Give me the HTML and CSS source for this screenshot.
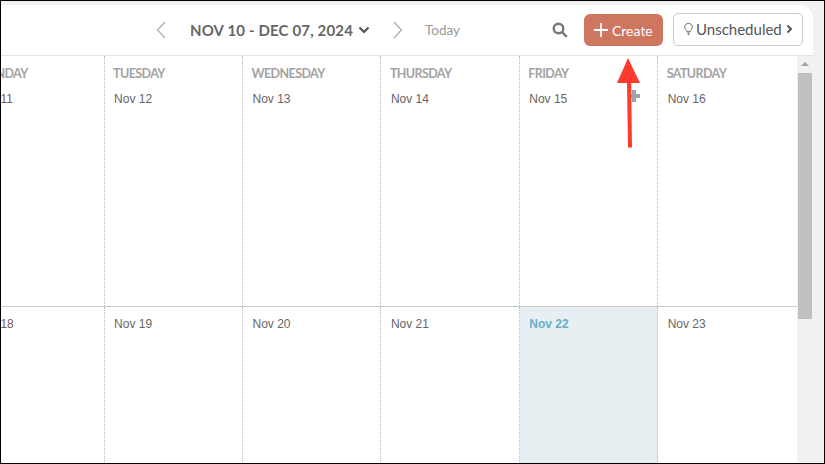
FILE: index.html
```html
<!DOCTYPE html>
<html lang="en">
<head>
  <meta charset="UTF-8">
  <meta name="viewport" content="width=device-width, initial-scale=1.0">
  <title>Calendar</title>
  <link rel="stylesheet" href="styles.css">
</head>
<body>
  <div class="app">
    <header class="topbar">
      <svg class="nav-arrow" width="10" height="18" viewBox="0 0 10 18"><path d="M9 1 1.500 9 9 17"/></svg>
      <div class="range">NOV 10 - DEC 07, 2024</div>
      <svg class="range-caret" width="12" height="8" viewBox="0 0 12 8"><path d="M1.500 1.500 6 6l4.500-4.500"/></svg>
      <svg class="nav-arrow next" width="10" height="18" viewBox="0 0 10 18"><path d="M1 1l7.500 8L1 17"/></svg>
      <span class="today-link">Today</span>
      <svg class="search" width="16" height="16" viewBox="0 0 16 16"><circle cx="6.500" cy="6.500" r="4.800"/><path d="M10 10l4.800 4.800"/></svg>
      <button class="btn-create">
        <svg width="14" height="14" viewBox="0 0 14 14"><path d="M7 0v14M0 7h14"/></svg>
        Create
      </button>
      <button class="btn-unscheduled">
        <svg width="9" height="14" viewBox="0 0 10 14"><path class="bulb" d="M3.300 10C3 7.800.8 7.400.8 4.700.8 2.400 2.700.8 5 .8s4.200 1.600 4.200 3.900C9.200 7.400 7 7.800 6.700 10z"/><path class="bulb-base" d="M3.600 11.500h2.800M4.200 13h1.600"/></svg>
        Unscheduled
        <svg class="caret" width="7" height="10" viewBox="0 0 7 10"><path d="M1.500 1.500 5 5 1.500 8.500"/></svg>
      </button>
    </header>

    <div class="content">
      <main class="calendar">
        <section class="week first">
          <div class="day"><div class="day-name">MONDAY</div><div class="date monday">Nov 11</div></div>
          <div class="day"><div class="day-name">TUESDAY</div><div class="date">Nov 12</div></div>
          <div class="day"><div class="day-name">WEDNESDAY</div><div class="date">Nov 13</div></div>
          <div class="day"><div class="day-name">THURSDAY</div><div class="date">Nov 14</div></div>
          <div class="day">
            <div class="day-name">FRIDAY</div>
            <div class="date-row">
              <div class="date">Nov 15</div>
              <svg class="add-event" width="12" height="12" viewBox="0 0 12 12"><path d="M6 0v12M0 6h12"/></svg>
            </div>
          </div>
          <div class="day"><div class="day-name">SATURDAY</div><div class="date">Nov 16</div></div>
        </section>
        <section class="week">
          <div class="day"><div class="date monday">Nov 18</div></div>
          <div class="day"><div class="date">Nov 19</div></div>
          <div class="day"><div class="date">Nov 20</div></div>
          <div class="day"><div class="date">Nov 21</div></div>
          <div class="day today"><div class="date">Nov 22</div></div>
          <div class="day"><div class="date">Nov 23</div></div>
        </section>
      </main>
      <div class="scrollbar">
        <div class="scroll-up"></div>
        <div class="scroll-thumb"></div>
      </div>
    </div>
  </div>

  <svg class="annotation" width="30" height="92" viewBox="0 0 30 92">
    <path d="M13 0 25 25H2z"/>
    <path d="M12 24h4.200L17 89.500h-4z"/>
  </svg>
</body>
</html>
```

FILE: styles.css
```css
html, body { margin: 0; height: 100%; }
body { position: relative; box-sizing: border-box; height: 464px; overflow: hidden; border: 1px solid #000; padding: 4px 11px 0 0; background-color: #f1f1f1; font-family: "Liberation Sans", sans-serif; }

.app { height: 100%; display: flex; flex-direction: column; background-color: #fff; border-top-right-radius: 14px; overflow: hidden; }

.topbar { flex: none; height: 51px; box-sizing: border-box; display: flex; align-items: center; padding: 0 10px 0 155px; border-bottom: 1px solid #e3e3e3; font-family: Lato, sans-serif; }
.nav-arrow { fill: none; stroke: #b0b0b0; stroke-width: 1.3; }
.nav-arrow.next { margin-left: 23px; }
.range { margin-left: 24px; font-size: 15px; font-weight: 700; letter-spacing: 0.15px; color: #666; }
.range-caret { margin-left: 5px; fill: none; stroke: #555; stroke-width: 2.2; }
.today-link { margin-left: 22px; font-size: 13.5px; color: #999; }
.search { margin-left: auto; fill: none; stroke: #777; stroke-width: 2.4; }
.btn-create { margin-left: 16px; width: 79px; height: 32px; padding: 0 0 0 10px; display: flex; align-items: center; gap: 4px; border: none; border-radius: 6px; background-color: #cf7660; color: #fff; font-family: Lato, sans-serif; font-size: 14px; }
.btn-create svg { stroke: #fff; stroke-width: 1.8; }
.btn-unscheduled { margin-left: 10px; width: 130px; height: 33px; margin-top: -2px; padding: 0 0 0 10px; display: flex; align-items: center; gap: 3px; box-sizing: border-box; border: 1px solid #c8c8c8; border-radius: 5px; background-color: #fff; color: #555; font-family: Lato, sans-serif; font-size: 15px; }
.btn-unscheduled .bulb { fill: none; stroke: #666; stroke-width: 1.1; }
.btn-unscheduled .bulb-base { fill: none; stroke: #666; stroke-width: 1.1; }
.btn-unscheduled .caret { margin-left: 1px; fill: none; stroke: #555; stroke-width: 2; }

.content { flex: 1; min-height: 0; display: flex; }
.calendar { flex: 1; min-width: 0; overflow: hidden; }
.week { display: grid; grid-template-columns: repeat(6, 138.4px); margin-left: -34.7px; height: 251px; border-bottom: 1px solid #ccc; box-sizing: border-box; }
.week + .week { height: 160px; border-bottom: none; }
.day { box-sizing: border-box; padding: 10px 9px 0 8.4px; border-right: 1px dotted #b5b5b5; }
.day:last-child { border-right: none; }
.day-name { height: 24px; margin-bottom: 2px; font-family: Lato, sans-serif; font-size: 12.5px; font-weight: 700; letter-spacing: -0.6px; line-height: 15px; color: #a3a3a3; }
.date { padding-left: 1px; font-size: 12px; line-height: 14px; color: #666; }
.date.monday { color: #7b5a50; }
.date-row { display: flex; justify-content: space-between; align-items: flex-start; }
.add-event { margin: -2px 8px 0 0; stroke: #9aa5ad; stroke-width: 4; }
.today { background-color: #e7eff2; }
.today .date { font-weight: 700; color: #68afcb; }

.scrollbar { flex: none; width: 16px; display: flex; flex-direction: column; align-items: center; background-color: #f1f1f1; }
.scroll-up { margin-top: 6px; width: 0; height: 0; border-left: 4px solid transparent; border-right: 4px solid transparent; border-bottom: 4px solid #a3a3a3; }
.scroll-thumb { margin-top: 7px; width: 14px; height: 246px; background-color: #c0c0c0; }

.annotation { position: absolute; left: 614px; top: 57px; }
.annotation path { fill: #ff3b30; }
```
